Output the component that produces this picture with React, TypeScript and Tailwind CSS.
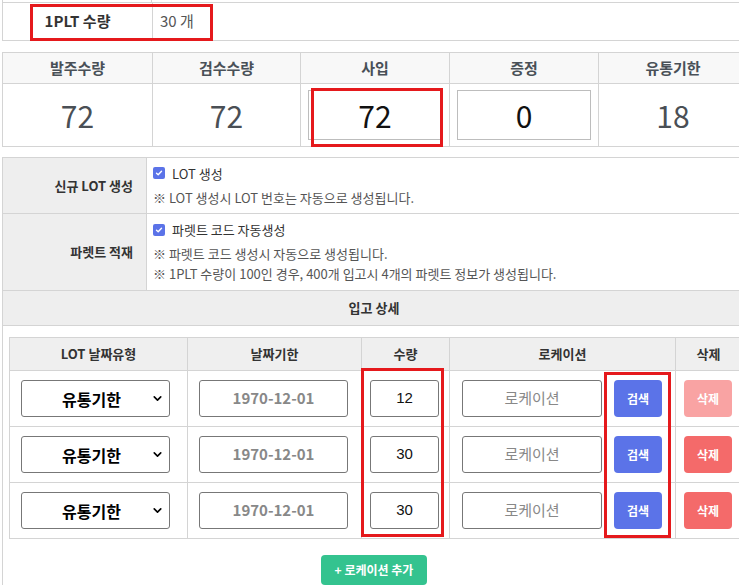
import { ChevronDown } from "lucide-react";

const stats = [
  { label: "발주수량", value: "72", input: false },
  { label: "검수수량", value: "72", input: false },
  { label: "사입", value: "72", input: true },
  { label: "증정", value: "0", input: true },
  { label: "유통기한", value: "18", input: false },
];

const rows = [
  { qty: "12", first: true },
  { qty: "30", first: false },
  { qty: "30", first: false },
];

function Check() {
  return (
    <span className="inline-flex h-[12px] w-[12px] items-center justify-center rounded-[2px] bg-[#5b73e8]">
      <svg width="8" height="8" viewBox="0 0 8 8" fill="none">
        <path d="M1.5 4.2 3.2 5.8 6.5 2.3" stroke="white" strokeWidth="1.4" strokeLinecap="round" strokeLinejoin="round" />
      </svg>
    </span>
  );
}

export default function App() {
  return (
    <div className="relative h-[585px] w-[739px] overflow-hidden bg-white font-['Noto_Sans_CJK_KR','Noto_Sans',sans-serif] text-[#333]">
      <div className="w-[745px] pl-[2px]">
        {/* cut-off row above */}
        <div className="flex h-[2px]">
          <div className="w-[150px] border-l border-r border-[#d4d4d4]" />
        </div>

        {/* 1PLT 수량 */}
        <div className="flex h-[39px] border-l border-t border-b border-[#d4d4d4]">
          <div className="flex w-[150px] items-center justify-center border-r border-[#d4d4d4] text-[15px] font-bold text-[#333]">
            1PLT 수량
          </div>
          <div className="flex items-center pl-[7px] text-[15px] text-[#555]">30 개</div>
        </div>

        {/* stats */}
        <div className="mt-[11px] grid grid-cols-[150px_148px_149px_149px_149px] border-l border-t border-[#d4d4d4]">
          {stats.map((s) => (
            <div key={s.label} className="flex flex-col border-r border-b border-[#d4d4d4]">
              <div className="flex h-[31px] items-center justify-center border-b border-[#d4d4d4] bg-[#f8f8f8] text-[15px] font-bold text-[#495057]">
                {s.label}
              </div>
              <div className="flex h-[62px] items-center justify-center px-[7px]">
                {s.input ? (
                  <div className="flex h-[50px] w-full items-center justify-center border border-[#bdbdbd] text-[30px] text-[#111]">
                    {s.value}
                  </div>
                ) : (
                  <span className="text-[30px] text-[#4a4f55]">{s.value}</span>
                )}
              </div>
            </div>
          ))}
        </div>

        {/* form */}
        <div className="mt-[10px] border-l border-t border-[#d4d4d4]">
          <div className="flex h-[56px] border-b border-[#d4d4d4]">
            <div className="flex w-[144px] items-center justify-end border-r border-[#d4d4d4] bg-[#eeeeee] pr-[13px] text-[13px] font-bold text-[#333]">
              신규 LOT 생성
            </div>
            <div className="flex flex-col justify-center gap-[5px] pl-[6px] text-[13px] text-[#555]">
              <div className="flex items-center gap-[7px] text-[13px] text-[#333]">
                <Check />
                LOT 생성
              </div>
              <div>※ LOT 생성시 LOT 번호는 자동으로 생성됩니다.</div>
            </div>
          </div>
          <div className="flex h-[77px] border-b border-[#d4d4d4]">
            <div className="flex w-[144px] items-center justify-end border-r border-[#d4d4d4] bg-[#eeeeee] pr-[13px] text-[13px] font-bold text-[#333]">
              파렛트 적재
            </div>
            <div className="flex flex-col justify-center pl-[6px] text-[13px] leading-[20px] text-[#555]">
              <div className="mb-[4px] flex items-center gap-[7px] text-[13px] text-[#333]">
                <Check />
                파렛트 코드 자동생성
              </div>
              <div>※ 파렛트 코드 생성시 자동으로 생성됩니다.</div>
              <div>※ 1PLT 수량이 100인 경우, 400개 입고시 4개의 파렛트 정보가 생성됩니다.</div>
            </div>
          </div>
          <div className="flex h-[35px] items-center justify-center border-b border-[#d4d4d4] bg-[#eeeeee] text-[13px] font-bold text-[#333]">
            입고 상세
          </div>

          {/* detail table */}
          <div className="px-[6px] pt-[11px]">
            <div className="grid grid-cols-[178px_174px_88px_226px_66px] border-l border-t border-[#d4d4d4]">
              {["LOT 날짜유형", "날짜기한", "수량", "로케이션", "삭제"].map((h) => (
                <div
                  key={h}
                  className="flex h-[33px] items-center justify-center border-r border-b border-[#d4d4d4] bg-[#efefef] text-[13px] font-bold text-[#333]"
                >
                  {h}
                </div>
              ))}
              {rows.map((r, i) => (
                <div key={i} className="contents">
                  <div className="flex h-[56px] items-center border-r border-b border-[#d4d4d4] pl-[11px]">
                    <div className="relative flex h-[37px] w-[149px] items-center justify-center rounded-[3px] border border-[#777] pr-[8px] text-[16px] font-bold text-black">
                      유통기한
                      <ChevronDown className="absolute right-[5px] h-[13px] w-[13px]" strokeWidth={3} />
                    </div>
                  </div>
                  <div className="flex h-[56px] items-center border-r border-b border-[#d4d4d4] pl-[11px]">
                    <div className="flex h-[37px] w-[149px] items-center justify-center rounded-[3px] border border-[#777] text-[15px] font-bold text-[#888]">
                      1970-12-01
                    </div>
                  </div>
                  <div className="flex h-[56px] items-center border-r border-b border-[#d4d4d4] pl-[8px]">
                    <div className="flex h-[37px] w-[69px] items-center justify-center rounded-[3px] border border-[#777] font-['Liberation_Sans',sans-serif] text-[15px] text-[#111]">
                      {r.qty}
                    </div>
                  </div>
                  <div className="flex h-[56px] items-center gap-[12px] border-r border-b border-[#d4d4d4] pl-[12px]">
                    <div className="flex h-[37px] w-[140px] items-center justify-center rounded-[3px] border border-[#777] text-[15px] text-[#888]">
                      로케이션
                    </div>
                    <button className="h-[37px] w-[48px] rounded-[4px] bg-[#5b73e8] text-[12px] font-bold text-white">
                      검색
                    </button>
                  </div>
                  <div className="flex h-[56px] items-center border-r border-b border-[#d4d4d4] pl-[8px]">
                    <button
                      className={`h-[37px] w-[48px] rounded-[4px] text-[12px] font-bold text-white ${
                        r.first ? "bg-[#f9a3a3]" : "bg-[#f46a6a]"
                      }`}
                    >
                      삭제
                    </button>
                  </div>
                </div>
              ))}
            </div>
            <div className="flex justify-center pt-[16px] pb-[20px]">
              <button className="h-[30px] w-[106px] rounded-[4px] bg-[#34c38f] text-[12px] font-bold text-white">
                + 로케이션 추가
              </button>
            </div>
          </div>
        </div>
      </div>

      {/* red annotation boxes */}
      <div className="pointer-events-none absolute left-[30px] top-[4px] h-[37px] w-[183px] border-[3px] border-[#e5191c]" />
      <div className="pointer-events-none absolute left-[311px] top-[88px] h-[59px] w-[132px] border-[3px] border-[#e5191c]" />
      <div className="pointer-events-none absolute left-[361px] top-[368px] h-[169px] w-[83px] border-[3px] border-[#e5191c]" />
      <div className="pointer-events-none absolute left-[604px] top-[372px] h-[166px] w-[67px] border-[3px] border-[#e5191c]" />
    </div>
  );
}
